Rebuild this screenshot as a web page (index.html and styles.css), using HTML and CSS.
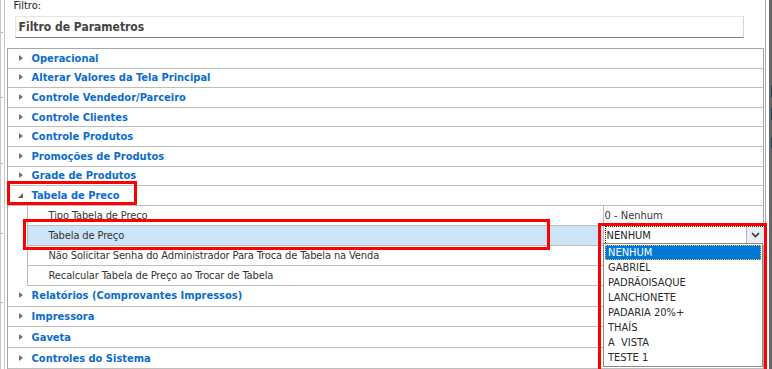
FILE: index.html
```html
<!DOCTYPE html>
<html lang="pt-BR">

<head>
    <meta charset="UTF-8">
    <title>Parametros</title>
    <link rel="stylesheet" href="styles.css">
</head>

<body>
    <div class="window">
        <div class="edge-left"></div>

        <main class="content">
            <div class="filter-label">Filtro:</div>
            <div class="filter-box">Filtro de Parametros</div>

            <div class="tree">
                <div class="group"><span class="arrow"></span>Operacional</div>
                <div class="group"><span class="arrow"></span>Alterar Valores da Tela Principal</div>
                <div class="group"><span class="arrow"></span>Controle Vendedor/Parceiro</div>
                <div class="group"><span class="arrow"></span>Controle Clientes</div>
                <div class="group"><span class="arrow"></span>Controle Produtos</div>
                <div class="group"><span class="arrow"></span>Promoções de Produtos</div>
                <div class="group"><span class="arrow"></span>Grade de Produtos</div>
                <div class="group open"><span class="arrow"></span>Tabela de Preco</div>
                <div class="children">
                    <div class="param">
                        <div class="param-name">Tipo Tabela de Preco</div>
                        <div class="param-value">0 - Nenhum</div>
                    </div>
                    <div class="param selected">
                        <div class="param-name">Tabela de Preço</div>
                        <div class="param-value">
                            <div class="select">
                                <span class="select-text">NENHUM</span>
                                <span class="select-btn">
                                    <svg width="9" height="6" viewBox="0 0 9 6"><path d="M1 1 L4.5 4.5 L8 1" fill="none" stroke="#333" stroke-width="1.6"/></svg>
                                </span>
                            </div>
                        </div>
                    </div>
                    <div class="param">
                        <div class="param-name">Não Solicitar Senha do Administrador Para Troca de Tabela na Venda</div>
                        <div class="param-value"></div>
                    </div>
                    <div class="param">
                        <div class="param-name">Recalcular Tabela de Preço ao Trocar de Tabela</div>
                        <div class="param-value"></div>
                    </div>
                </div>
                <div class="group tall"><span class="arrow"></span>Relatórios (Comprovantes Impressos)</div>
                <div class="group tall"><span class="arrow"></span>Impressora</div>
                <div class="group tall"><span class="arrow"></span>Gaveta</div>
                <div class="group tall"><span class="arrow"></span>Controles do Sistema</div>
            </div>
        </main>

        <div class="edge-right">
            <div class="bar"></div>
        </div>
    </div>

    <!-- lista aberta do combo -->
    <ul class="dropdown">
        <li class="current">NENHUM</li>
        <li>GABRIEL</li>
        <li>PADRÃOISAQUE</li>
        <li>LANCHONETE</li>
        <li>PADARIA 20%+</li>
        <li>THAÍS</li>
        <li>A&nbsp; VISTA</li>
        <li>TESTE 1</li>
    </ul>

    <!-- marcacoes em vermelho -->
    <div class="mark mark-group"></div>
    <div class="mark mark-row"></div>
    <div class="mark mark-combo"></div>
</body>

</html>
```

FILE: styles.css
```css
* {
    margin: 0;
    padding: 0;
    box-sizing: border-box;
    list-style-type: none;
}

body {
    width: 772px;
    height: 369px;
    overflow: hidden;
    background-color: #fff;
    font-family: "DejaVu Sans Condensed", "DejaVu Sans", sans-serif;
    font-size: 11px;
    color: #333;
    position: relative;
}

.window {
    display: flex;
    height: 369px;
}

.edge-left {
    width: 7px;
    border-left: 1px solid #c8c8c8;
    background-image:
        linear-gradient(#c8c8c8, #c8c8c8),
        linear-gradient(#b0b0b0, #b0b0b0),
        linear-gradient(#b0b0b0, #b0b0b0),
        linear-gradient(#b0b0b0, #b0b0b0),
        linear-gradient(#b0b0b0, #b0b0b0),
        linear-gradient(#b0b0b0, #b0b0b0);
    background-size: 1px 100%, 2px 1px, 2px 1px, 2px 1px, 2px 1px, 2px 1px;
    background-position: 3px 0, 0 32px, 0 97px, 0 163px, 0 233px, 0 302px;
    background-repeat: no-repeat;
}

.content {
    flex: 1;
    display: flex;
    flex-direction: column;
}

.filter-label {
    height: 16px;
    padding-left: 7px;
    line-height: 12px;
    font-size: 11px;
    color: #222;
}

.filter-box {
    margin-left: 8px;
    width: 729px;
    height: 22px;
    border: 1px solid #e6e6e6;
    border-bottom: 1px solid #7c7c7c;
    border-right: 1px solid #d6d6d6;
    padding-left: 3px;
    line-height: 20px;
    font-size: 12px;
    font-weight: bold;
    color: #444;
}

.tree {
    margin-top: 10px;
    width: 757px;
    border: 1px solid #a6a6a6;
    border-bottom: none;
}

.group {
    display: flex;
    align-items: center;
    height: 19.6px;
    border-bottom: 1px solid #bdbdbd;
    padding-left: 11px;
    font-weight: bold;
    color: #0b6ccd;
}

.group.tall {
    height: 20.8px;
}

.arrow {
    width: 13px;
    height: 7px;
    position: relative;
}

.arrow::before {
    content: "";
    position: absolute;
    left: 0;
    top: 0;
    border-left: 4px solid #707070;
    border-top: 3.5px solid transparent;
    border-bottom: 3.5px solid transparent;
}

.group.open .arrow::before {
    top: 1px;
    left: -1px;
    border: none;
    border-right: 5px solid #606060;
    border-top: 5px solid transparent;
}

.children {
    margin-left: 19px;
    border-left: 1px solid #bdbdbd;
}

.param {
    display: flex;
    height: 20px;
    border-bottom: 1px solid #bdbdbd;
}

.param-name {
    width: 575px;
    padding-left: 21px;
    line-height: 19px;
    letter-spacing: -0.12px;
    white-space: nowrap;
    overflow: hidden;
}

.param-value {
    flex: 1;
    border-left: 1px solid #bdbdbd;
    padding-left: 1px;
    line-height: 19px;
}

.param.selected .param-name {
    background-color: #cce4f7;
}

.select {
    display: flex;
    height: 19px;
    margin-right: -2px;
    border: 1px dotted #222;
    background-color: #fff;
}

.select-text {
    flex: 1;
    line-height: 17px;
    padding-left: 1px;
    color: #222;
}

.select-btn {
    width: 18px;
    display: flex;
    align-items: center;
    justify-content: center;
    background-color: #e8eef4;
    border-left: 1px solid #b8b8b8;
}

.edge-right {
    width: 9px;
    display: flex;
    border-left: 1px solid #fff;
}

.edge-right::before {
    content: "";
    width: 2px;
    border-left: 1px solid #a8a8a8;
}

.bar {
    flex: 1;
    margin-left: 1px;
    background-color: #686868;
    background-image:
        linear-gradient(#1d3a4d, #1d3a4d),
        linear-gradient(#1d3a4d, #1d3a4d),
        linear-gradient(#1d3a4d, #1d3a4d);
    background-size: 4px 12px, 4px 12px, 4px 11px;
    background-position: 2px 85px, 2px 108px, 2px 137px;
    background-repeat: no-repeat;
}

.dropdown {
    position: absolute;
    left: 603px;
    top: 243px;
    width: 160px;
    height: 124px;
    border: 1px solid #8a8a8a;
    background-color: #fff;
    padding: 1px;
    color: #2a2a2a;
}

.dropdown li {
    height: 15px;
    line-height: 14px;
    padding-left: 2px;
    border: 1px solid transparent;
}

.dropdown li.current {
    background-color: #0078d7;
    color: #fff;
    border: 1px dotted #f0c040;
}

.mark {
    position: absolute;
    border: 3px solid #f00;
}

.mark-group {
    left: 7px;
    top: 181px;
    width: 130px;
    height: 24px;
}

.mark-row {
    left: 23px;
    top: 219px;
    width: 527px;
    height: 31px;
}

.mark-combo {
    left: 598px;
    top: 223px;
    width: 169px;
    height: 150px;
}
```
